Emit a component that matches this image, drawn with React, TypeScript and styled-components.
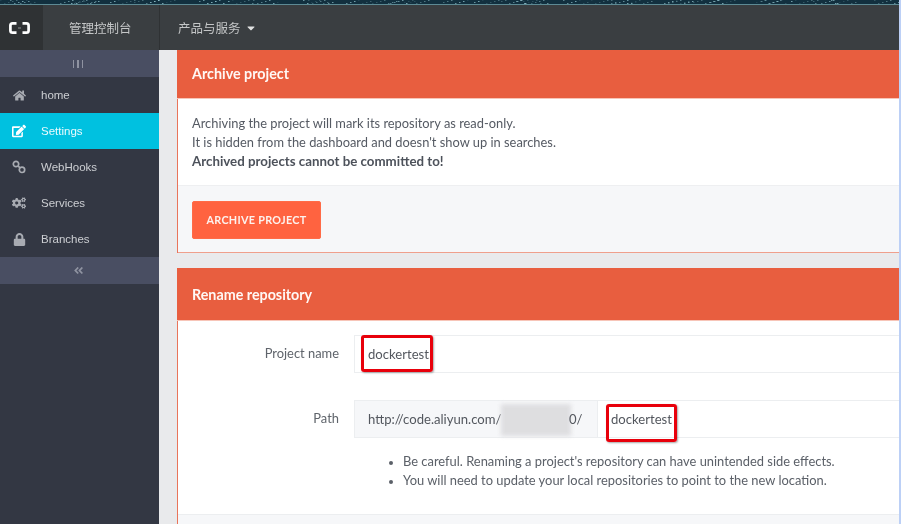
import React from 'react';
import styled, { createGlobalStyle } from 'styled-components';
import { FaHome, FaEdit, FaCogs, FaLock, FaAngleDoubleLeft, FaCaretDown } from 'react-icons/fa';

const Global = createGlobalStyle`
  html, body { margin: 0; padding: 0; width: 901px; height: 524px; overflow: hidden; background: #e9eaec; }
  * { box-sizing: border-box; }
`;
const Frame = styled.div`
  width: 901px; height: 524px; overflow: hidden; border-right: 2px solid #bcd0f6;
`;
const Page = styled.div`
  width: 899px; height: 524px; display: flex; flex-direction: column; overflow: hidden;
  font-family: Lato, "Noto Sans CJK SC", sans-serif; color: #555a63; filter: blur(.3px);
`;
const Strip = styled.svg`display: block; width: 899px; height: 5px; flex: none;`;
const TopBar = styled.header`
  height: 45px; flex: none; display: flex; background: #3a3e41; color: #c4c6c7;
  font-family: "Noto Sans CJK SC", sans-serif; font-size: 12.5px;
`;
const LogoCell = styled.div`
  width: 43px; background: #2f3234; display: flex; align-items: center; padding-left: 9px;
`;
const NavCell = styled.div<{ $w: number; $pad: number }>`
  width: ${p => p.$w}px; padding-left: ${p => p.$pad}px; display: flex; align-items: center; gap: 4px;
  border-right: ${p => (p.$w < 200 ? '1px solid #2f3234' : 'none')};
`;
const Body = styled.div`flex: 1; display: flex; min-height: 0;`;
const Sidebar = styled.aside`
  width: 159px; flex: none; background: #333743; display: flex; flex-direction: column;
  font-family: "Liberation Sans", Arial, sans-serif; font-size: 11.5px; color: #ccced2;
`;
const SideBand = styled.div<{ $h: number }>`
  height: ${p => p.$h}px; background: #494e62; display: flex; align-items: center; justify-content: center;
  color: #8f93a1; padding-right: 3px;
`;
const Bars = styled.span`display: flex; gap: 3px;`;
const Bar = styled.i`display: block; width: 1.5px; height: 8px; background: #8f93a1;`;
const SideItem = styled.div<{ $active?: boolean }>`
  height: 36px; display: flex; align-items: center; padding-left: 11px;
  background: ${p => (p.$active ? '#00c1e0' : 'transparent')};
  color: ${p => (p.$active ? '#e8fafd' : '#ccced2')};
`;
const IconBox = styled.span<{ $active?: boolean }>`
  width: 16px; height: 16px; flex: none; display: flex; align-items: center; justify-content: center;
  color: ${p => (p.$active ? '#fff' : '#a8abb2')};
  svg { flex: none; }
`;
const SideLabel = styled.span`margin-left: 14px;`;
const Main = styled.main`flex: 1; padding-left: 18px; display: flex; flex-direction: column; gap: 15px; min-width: 0;`;
const Panel = styled.section`
  background: #fff; border-left: 1px solid #e9745a; display: flex; flex-direction: column; flex: none;
`;
const PanelHead = styled.h2<{ $h: number; $lift?: number }>`
  margin: 0 0 0 -1px; height: ${p => p.$h}px; background: #e85e3f; color: #fff8f5; font-size: 14.3px; font-weight: 700;
  display: flex; align-items: center; padding: 0 0 ${p => p.$lift ?? 0}px 15px;
  border-bottom: 1px solid #f7c5b8;
`;
const PanelBody = styled.div`
  height: 86px; padding: 15px 14px 0; font-size: 12.87px; line-height: 19px; color: #555a63;
  p { margin: 0; } b { font-weight: 700; font-size: 13.3px; color: #4d525b; }
`;
const PanelFoot = styled.div`
  height: 68px; background: #f6f7f9; border-top: 1px solid #eeeff1; border-bottom: 1px solid #ef9f8c;
  padding: 15px 14px;
`;
const DangerButton = styled.button`
  width: 129px; height: 38px; border: 1px solid #ff6b47; border-radius: 2px; background: #ff6340; color: #fdf2ee;
  font: 700 10.8px/1 Lato, sans-serif; letter-spacing: .3px; padding: 0;
`;
const Form = styled.div`
  position: relative; padding-top: 14px; display: flex; flex-direction: column; height: 193px;
`;
const Row = styled.div<{ $mb: number }>`
  display: flex; align-items: center; margin-bottom: ${p => p.$mb}px;
`;
const Label = styled.label`
  width: 161px; flex: none; text-align: right; font-size: 12.9px; color: #5f646b; margin-top: -2px;
`;
const Field = styled.div`
  margin-left: 15px; flex: 1; height: 38px; border: 1px solid #eceef0; border-right: none; background: #fff;
  display: flex; align-items: center; font-size: 13.1px; color: #53575e;
`;
const Value = styled.span`padding-left: 13px;`;
const Prefix = styled.div`
  position: relative; width: 243px; height: 100%; flex: none; background: #f6f7f9; border-right: 1px solid #eceef0;
  padding-left: 13px; display: flex; align-items: center; white-space: nowrap;
`;
const Blur = styled.span`
  position: absolute; left: 146px; top: 3px; width: 70px; height: 32px; background: #dedee0; filter: blur(2px);
`;
const Tail = styled.span`position: absolute; left: 214px;`;
const Hints = styled.ul`
  margin: 0; padding: 0 0 0 225px; font-size: 12.9px; line-height: 19px; color: #5b6068; list-style: disc;
  li::marker { font-size: 11px; }
`;
const Foot = styled.div`height: 30px; background: #f6f7f9; border-top: 1px solid #eceef0;`;
const Mark = styled.span<{ $x: number; $y: number; $w: number; $h: number }>`
  position: absolute; left: ${p => p.$x}px; top: ${p => p.$y}px; width: ${p => p.$w}px; height: ${p => p.$h}px;
  border: 3px solid #e8000b; border-radius: 3px; box-shadow: 1px 1px 2px rgba(0,0,0,.35);
`;

const stars = Array.from({ length: 260 }, (_, i) => ({
  x: (i * 73 + (i * i) % 37) % 899,
  y: (i * 7) % 4,
  o: 0.12 + ((i * 13) % 10) / 16,
}));

const Logo = () => (
  <svg width="21" height="12" viewBox="0 0 21 12" fill="none" stroke="#fff" strokeWidth="2.7">
    <path d="M7.5 1.4H3.6Q1.4 1.4 1.4 3.6V8.4Q1.4 10.6 3.6 10.6H7.5" />
    <path d="M13.5 1.4H17.4Q19.6 1.4 19.6 3.6V8.4Q19.6 10.6 17.4 10.6H13.5" />
    <path d="M9 6H12" strokeWidth=".8" opacity=".6" />
  </svg>
);
const HookIcon = () => (
  <svg width="14" height="14" viewBox="0 0 14 14" fill="none" stroke="currentColor" strokeWidth="1.7">
    <circle cx="4" cy="4" r="2.7" />
    <circle cx="10" cy="9.8" r="2.7" />
    <path d="M6 5.9 8 7.9" />
  </svg>
);

const items = [
  { label: 'home', icon: <FaHome size={13} /> },
  { label: 'Settings', icon: <FaEdit size={14} />, active: true },
  { label: 'WebHooks', icon: <HookIcon /> },
  { label: 'Services', icon: <FaCogs size={14} /> },
  { label: 'Branches', icon: <FaLock size={13} /> },
];

export default function App() {
  return (
    <Frame>
      <Global />
      <Page>
        <Strip viewBox="0 0 899 5">
          <rect width="899" height="4" fill="#12303f" />
          <rect y="4" width="899" height="1" fill="#5d8a94" />
          {stars.map((s, i) => <rect key={i} x={s.x} y={s.y} width="1.5" height="1" fill="#9fd0da" opacity={s.o} />)}
        </Strip>
        <TopBar>
          <LogoCell><Logo /></LogoCell>
          <NavCell $w={117} $pad={26}>管理控制台</NavCell>
          <NavCell $w={600} $pad={18}>产品与服务<FaCaretDown size={12} color="#e0e1e2" /></NavCell>
        </TopBar>
        <Body>
          <Sidebar>
            <SideBand $h={27}><Bars><Bar /><Bar /><Bar /></Bars></SideBand>
            {items.map(it => (
              <SideItem key={it.label} $active={it.active}>
                <IconBox $active={it.active}>{it.icon}</IconBox>
                <SideLabel>{it.label}</SideLabel>
              </SideItem>
            ))}
            <SideBand $h={27}><FaAngleDoubleLeft size={11} /></SideBand>
          </Sidebar>
          <Main>
            <Panel>
              <PanelHead $h={49} $lift={1}>Archive project</PanelHead>
              <PanelBody>
                <p>Archiving the project will mark its repository as read-only.</p>
                <p>It is hidden from the dashboard and doesn't show up in searches.</p>
                <p><b>Archived projects cannot be committed to!</b></p>
              </PanelBody>
              <PanelFoot><DangerButton>ARCHIVE PROJECT</DangerButton></PanelFoot>
            </Panel>
            <Panel>
              <PanelHead $h={53}>Rename repository</PanelHead>
              <Form>
                <Row $mb={27}>
                  <Label>Project name</Label>
                  <Field><Value>dockertest</Value></Field>
                </Row>
                <Row $mb={14}>
                  <Label>Path</Label>
                  <Field>
                    <Prefix>http://code.aliyun.com/<Blur /><Tail>0/</Tail></Prefix>
                    <Value>dockertest</Value>
                  </Field>
                </Row>
                <Hints>
                  <li>Be careful. Renaming a project's repository can have unintended side effects.</li>
                  <li>You will need to update your local repositories to point to the new location.</li>
                </Hints>
                <Mark $x={183} $y={14} $w={72} $h={37} />
                <Mark $x={428} $y={83} $w={71} $h={38} />
              </Form>
              <Foot />
            </Panel>
          </Main>
        </Body>
      </Page>
    </Frame>
  );
}
